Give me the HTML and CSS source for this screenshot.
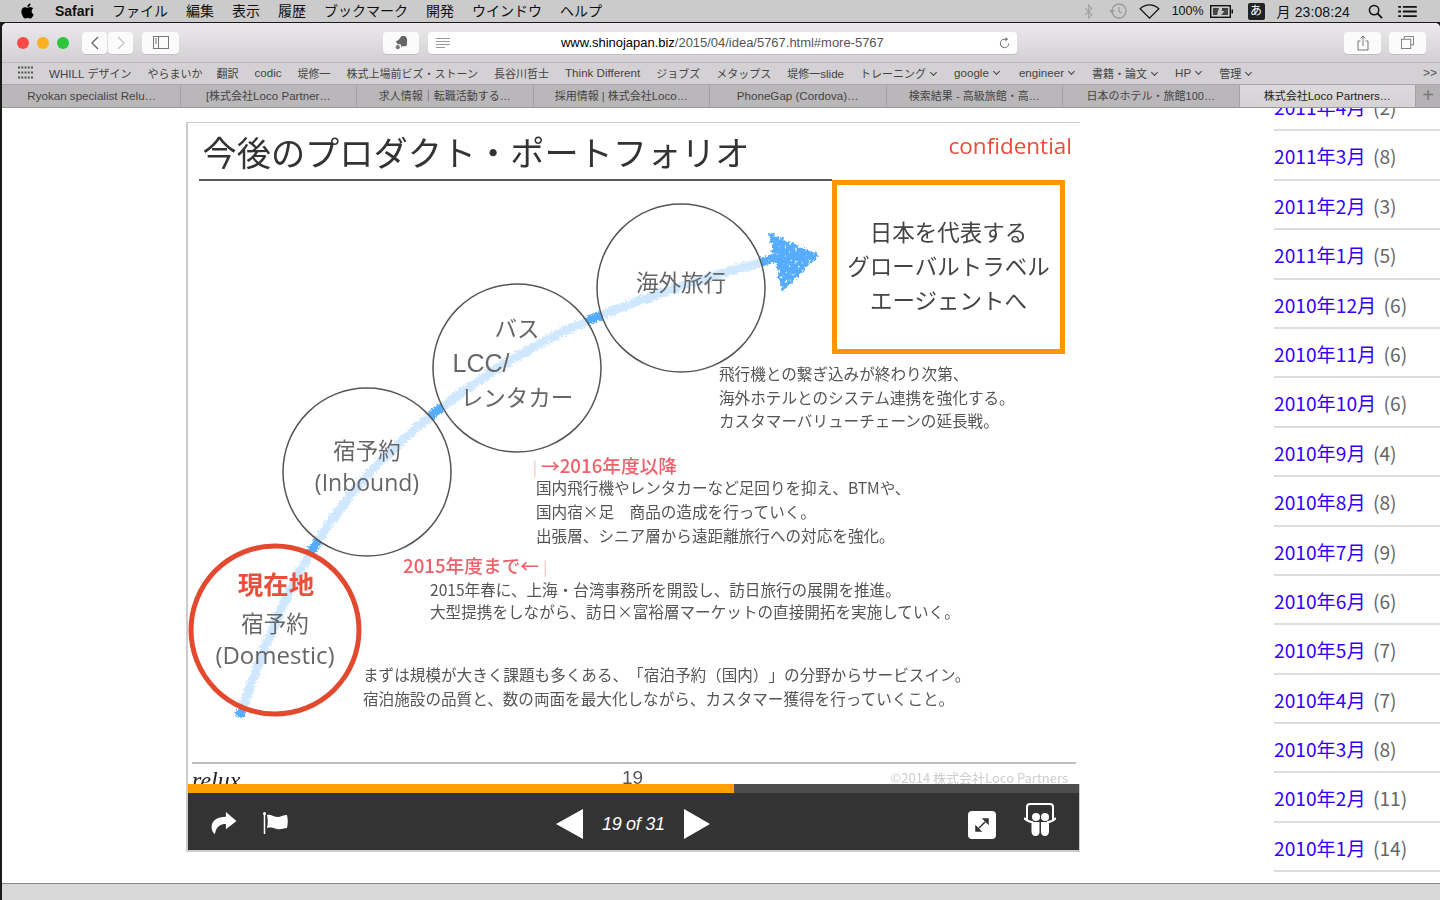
FILE: index.html
```html
<!DOCTYPE html>
<html lang="ja">
<head>
<meta charset="UTF-8">
<title>Safari</title>
<link rel="stylesheet" href="styles.css">
</head>
<body>
<!-- system menu bar -->
<header class="menubar">
	<svg class="apple" viewBox="0 0 16 16"><path d="M11.182.008C11.148-.03 9.923.023 8.857 1.18c-1.066 1.156-.902 2.482-.878 2.516s1.52.087 2.475-1.258.762-2.391.728-2.43m3.314 11.733c-.048-.096-2.325-1.234-2.113-3.422s1.675-2.789 1.698-2.854-.597-.79-1.254-1.157a3.7 3.7 0 0 0-1.563-.434c-.108-.003-.483-.095-1.254.116-.508.139-1.653.589-1.968.607-.316.018-1.256-.522-2.267-.665-.647-.125-1.333.131-1.824.328-.49.196-1.422.754-2.074 2.237-.652 1.482-.311 3.83-.067 4.56s.625 1.924 1.273 2.796c.576.984 1.34 1.667 1.659 1.899s1.219.386 1.843.067c.502-.308 1.408-.485 1.766-.472.357.013 1.061.154 1.782.539.571.197 1.111.115 1.652-.105.541-.221 1.324-1.059 2.238-2.758q.52-1.185.473-1.282"/></svg>
	<nav class="menu">
		<b>Safari</b>
		<span>ファイル</span>
		<span>編集</span>
		<span>表示</span>
		<span>履歴</span>
		<span>ブックマーク</span>
		<span>開発</span>
		<span>ウインドウ</span>
		<span>ヘルプ</span>
	</nav>
	<div class="status">
		<svg class="st-bt" viewBox="0 0 10 16"><path d="M1 4.500l7 7-3.500 3.500V1L8 4.500l-7 7" fill="none" stroke="#a0a0a0" stroke-width="1.100"/></svg>
		<svg class="st-tm" viewBox="0 0 20 18"><circle cx="11" cy="9" r="7" fill="none" stroke="#9a9a9a" stroke-width="1.300"/><path d="M11 5v4.500l3 1.500" fill="none" stroke="#9a9a9a" stroke-width="1.200"/><path d="M1 8l3 3.500L7 8z" fill="#9a9a9a"/></svg>
		<svg class="st-wifi" viewBox="0 0 22 16"><path d="M1 5C7-.5 15-.5 21 5L11 15z" fill="none" stroke="#111" stroke-width="1.300"/></svg>
		<span class="st-pct">100%</span>
		<svg class="st-batt" viewBox="0 0 24 13"><rect x=".7" y=".7" width="19.600" height="11.600" fill="none" stroke="#111" stroke-width="1.400"/><path d="M3 3h6l-2 7H3zM12 3h6v7h-8z" fill="#444"/><path d="M12.500 1L7.500 7h3l-1 5 5-6h-3z" fill="#cbcbcb"/><rect x="21.500" y="4.500" width="1.500" height="4" fill="#111"/></svg>
		<span class="st-ime">あ</span>
		<span class="st-time">月 23:08:24</span>
		<svg class="st-search" viewBox="0 0 16 16"><circle cx="6.500" cy="6.500" r="5" fill="none" stroke="#111" stroke-width="1.600"/><path d="M10 10l5 5" stroke="#111" stroke-width="2"/></svg>
		<svg class="st-list" viewBox="0 0 20 14"><path d="M0 2h3M5 2h15M0 7h3M5 7h15M0 12h3M5 12h15" stroke="#111" stroke-width="2"/></svg>
	</div>
</header>

<div class="window">
	<div class="toolbar">
		<div class="lights">
			<i class="light red"></i>
			<i class="light yellow"></i>
			<i class="light green"></i>
		</div>
		<div class="navbtns">
			<button class="btn btn-nav"><svg viewBox="0 0 10 16"><path d="M8 2L2 8l6 6" fill="none" stroke="#666" stroke-width="1.300"/></svg></button>
			<button class="btn btn-nav"><svg viewBox="0 0 10 16"><path d="M2 2l6 6-6 6" fill="none" stroke="#c4c4c4" stroke-width="1.300"/></svg></button>
		</div>
		<button class="btn btn-side"><svg viewBox="0 0 16 13"><rect x=".5" y=".5" width="15" height="12" fill="none" stroke="#777"/><path d="M5.500 .5v12M2 3h2M2 5h2M2 7h2" stroke="#777"/></svg></button>
		<button class="btn btn-ever"><svg viewBox="0 0 14 16"><path d="M4 5l3-4h4l2 3v6l-1 2H8l-1 1-1-3H3L1 7z" fill="#666"/><circle cx="3" cy="13" r="2.200" fill="#777"/></svg></button>
		<div class="urlbar">
			<svg class="reader" viewBox="0 0 14 10"><path d="M0 .5h14M0 3.500h14M0 6.500h14M0 9.500h9" stroke="#999"/></svg>
			<span class="url"><em>www.shinojapan.biz</em>/2015/04/idea/5767.html#more-5767</span>
			<svg class="reload" viewBox="0 0 14 14"><path d="M11.500 7.500a4.500 4.500 0 1 1-4.500-4.500h2" fill="none" stroke="#777" stroke-width="1.100"/><path d="M8 .5l3 2.500-3 2.500z" fill="#777"/></svg>
		</div>
		<button class="btn btn-right btn-share"><svg viewBox="0 0 12 16"><path d="M3.500 6H1v9h10V6H8.500M6 11V1M3.500 3.500L6 1l2.500 2.500" fill="none" stroke="#777"/></svg></button>
		<button class="btn btn-right btn-tabs"><svg viewBox="0 0 14 14"><path d="M3.500 3.500V.5h10v9h-3" fill="none" stroke="#777"/><rect x=".5" y="3.500" width="10" height="10" fill="none" stroke="#777"/></svg></button>
	</div>

	<div class="bookmarks">
		<svg class="grid-ico" viewBox="0 0 15 13"><path d="M0 1.500h15M0 6.500h15M0 11.500h15" stroke="#555" stroke-width="2" stroke-dasharray="2 1.250"/></svg>
		<a><span class="en">WHILL</span> デザイン</a>
		<a>やらまいか</a>
		<a class="bm-back">翻訳</a>
		<a class="en">codic</a>
		<a>堤修一</a>
		<a>株式上場前ビズ・ストーン</a>
		<a>長谷川哲士</a>
		<a class="en">Think Different</a>
		<a>ジョブズ</a>
		<a>メタップス</a>
		<a>堤修一<span class="en">slide</span></a>
		<a class="drop">トレーニング</a>
		<a class="drop en">google</a>
		<a class="drop en bm-fwd">engineer</a>
		<a class="drop">書籍・論文</a>
		<a class="drop en">HP</a>
		<a class="drop">管理</a>
		<span class="more">&gt;&gt;</span>
	</div>

	<div class="tabs">
		<div class="tab en">Ryokan specialist Relu…</div>
		<div class="tab">[株式会社<span class="en">Loco Partner</span>…</div>
		<div class="tab">求人情報｜転職活動する…</div>
		<div class="tab">採用情報 | 株式会社<span class="en">Loco</span>…</div>
		<div class="tab en">PhoneGap (Cordova)…</div>
		<div class="tab">検索結果 - 高級旅館・高…</div>
		<div class="tab">日本のホテル・旅館100…</div>
		<div class="tab active">株式会社<span class="en">Loco Partners</span>…</div>
		<div class="tab-add">+</div>
	</div>

	<main class="page">
		<section class="player">
			<!-- slide is a free canvas, everything on it is placed by hand -->
			<div class="slide">
				<svg class="art" viewBox="0 0 892 661">
					<defs>
						<filter id="chalk"><feTurbulence baseFrequency=".35" numOctaves="2" seed="4"/><feDisplacementMap in="SourceGraphic" scale="5"/></filter>
						<filter id="speckle" x="-10%" y="-10%" width="120%" height="120%">
							<feTurbulence type="fractalNoise" baseFrequency=".3" numOctaves="2" seed="9" result="n"/>
							<feDisplacementMap in="SourceGraphic" in2="n" scale="7" xChannelSelector="R" yChannelSelector="G" result="rough"/>
							<feColorMatrix in="n" type="matrix" values="0 0 0 0 0 0 0 0 0 0 0 0 0 0 0 8 0 0 0 -1.800" result="holes"/>
							<feComposite in="rough" in2="holes" operator="in"/>
						</filter>
					</defs>
					<path class="stroke" d="M50 593C72 530 95 470 125 422C160 365 200 325 247 287C295 250 345 218 407 193C465 170 525 150 590 133"/>
					<path class="head" d="M580 110L632 132L594 169L588 140z"/>
					<circle class="ring" cx="493" cy="165" r="84"/>
					<circle class="ring" cx="329" cy="245" r="84"/>
					<circle class="ring" cx="179" cy="349" r="84"/>
					<circle class="ring here" cx="87" cy="507" r="84"/>
					<path class="rule" d="M11 57H644"/>
					<path class="rule-foot" d="M4 640H888"/>
				</svg>
				<h1 class="s-title">今後のプロダクト・ポートフォリオ</h1>
				<div class="s-conf">confidential</div>
				<div class="s-goal">日本を代表する<br>グローバルトラベル<br>エージェントへ</div>

				<div class="lbl l-abroad">海外旅行</div>
				<div class="lbl l-bus">バス</div>
				<div class="lbl l-lcc">LCC/</div>
				<div class="lbl l-rent">レンタカー</div>
				<div class="lbl l-inb1">宿予約</div>
				<div class="lbl l-inb2">(Inbound)</div>
				<div class="lbl l-now">現在地</div>
				<div class="lbl l-dom1">宿予約</div>
				<div class="lbl l-dom2">(Domestic)</div>

				<p class="note n-1">飛行機との繋ぎ込みが終わり次第、<br>海外ホテルとのシステム連携を強化する。<br>カスタマーバリューチェーンの延長戦。</p>
				<div class="head-red h-2016"><u>|</u> →2016年度以降</div>
				<p class="note n-2">国内飛行機やレンタカーなど足回りを抑え、BTMや、<br>国内宿×足　商品の造成を行っていく。<br>出張層、シニア層から遠距離旅行への対応を強化。</p>
				<div class="head-red h-2015">2015年度まで← <u>|</u></div>
				<p class="note n-3">2015年春に、上海・台湾事務所を開設し、訪日旅行の展開を推進。<br>大型提携をしながら、訪日×富裕層マーケットの直接開拓を実施していく。</p>
				<p class="note n-4">まずは規模が大きく課題も多くある、「宿泊予約（国内）」の分野からサービスイン。<br>宿泊施設の品質と、数の両面を最大化しながら、カスタマー獲得を行っていくこと。</p>

				<div class="s-logo">relux</div>
				<div class="s-num">19</div>
				<div class="s-copy">©2014 株式会社Loco Partners</div>
			</div>

			<div class="progress"><div class="progress-on" style="width: 61.3%"></div></div>

			<div class="controls">
				<div class="ctl-left">
					<svg class="ic-share" viewBox="0 0 26 23"><path d="M15 0l11 9.500L15 18v-5.500C9 12.500 5 15 3.500 23 1.500 22 0 19 0 16 0 9 6 5 15 5z" fill="#fff"/></svg>
					<svg class="ic-flag" viewBox="0 0 26 22"><circle cx="1.500" cy="1.500" r="1.500" fill="#fff"/><path d="M1.500 1v21" stroke="#fff" stroke-width="1.500"/><path d="M4 3c4-1 6 2 10 2s6-2 10-2c1 4 1 9 0 13-4 0-6 2-10 1s-6-2-10-1c1-4 1-9 0-13z" fill="#fff"/></svg>
				</div>
				<div class="ctl-mid">
					<i class="tri tri-l"></i>
					<span class="count">19 of 31</span>
					<i class="tri tri-r"></i>
				</div>
				<div class="ctl-right">
					<span class="ic-full"><svg viewBox="0 0 14 14"><path d="M8.500 1H13v4.500zM5.500 13H1V8.500zM10 4L4 10" fill="#333" stroke="#333" stroke-width="1.500"/></svg></span>
					<svg class="ic-ss" viewBox="0 0 32 33"><path d="M3 18V4a3 3 0 0 1 3-3h20a3 3 0 0 1 3 3v14" fill="none" stroke="#fff" stroke-width="2"/><path d="M0 15c3 3 5 4 9 4M32 15c-3 3-5 4-9 4" fill="none" stroke="#fff" stroke-width="2"/><circle cx="12" cy="14" r="4" fill="#fff"/><circle cx="21" cy="14" r="4" fill="#fff"/><path d="M7.500 19h8v9.500a4 4 0 0 1-4 4.500c-2.500 0-4-2-4-4.500zM17 19h8v9.500c0 2.500-1.500 4.500-4 4.500a4 4 0 0 1-4-4.500z" fill="#fff"/></svg>
				</div>
			</div>
		</section>

		<ul class="archive">
			<li><a>2011年4月</a> (2)</li>
			<li><a>2011年3月</a> (8)</li>
			<li><a>2011年2月</a> (3)</li>
			<li><a>2011年1月</a> (5)</li>
			<li><a>2010年12月</a> (6)</li>
			<li><a>2010年11月</a> (6)</li>
			<li><a>2010年10月</a> (6)</li>
			<li><a>2010年9月</a> (4)</li>
			<li><a>2010年8月</a> (8)</li>
			<li><a>2010年7月</a> (9)</li>
			<li><a>2010年6月</a> (6)</li>
			<li><a>2010年5月</a> (7)</li>
			<li><a>2010年4月</a> (7)</li>
			<li><a>2010年3月</a> (8)</li>
			<li><a>2010年2月</a> (11)</li>
			<li><a>2010年1月</a> (14)</li>
		</ul>
	</main>

	<div class="hscroll"></div>
</div>
</body>
</html>
```

FILE: styles.css
```css
* {
	box-sizing: border-box;
}
html, body {
	height: 100%;
}
body {
	margin: 0;
	display: flex;
	flex-direction: column;
	overflow: hidden;
	background: #1a1a1a;
	font-family: "Liberation Sans", "Noto Sans CJK JP", sans-serif;
}
.en {
	font-size: 11.600px;
}

/* menu bar */
.menubar {
	display: flex;
	align-items: center;
	height: 22px;
	flex: none;
	background: #cbcbcb;
	color: #111;
	font-size: 14px;
}
.apple {
	width: 15px;
	height: 16px;
	margin-left: 20px;
}
.menu {
	display: flex;
	align-items: baseline;
	gap: 18px;
	margin: -1px 0 0 20px;
	line-height: 20px;
}
.status {
	display: flex;
	align-items: center;
	margin-left: auto;
	font-size: 13px;
}
.st-bt {
	width: 10px;
	height: 15px;
	margin-right: 14px;
}
.st-tm {
	width: 20px;
	height: 18px;
	margin-right: 11px;
}
.st-wifi {
	width: 21px;
	height: 15px;
	margin-right: 12px;
}
.st-pct {
	margin-right: 6px;
	font-size: 12.500px;
}
.st-batt {
	width: 24px;
	height: 13px;
	margin-right: 14px;
}
.st-ime {
	width: 17px;
	height: 17px;
	margin-right: 12px;
	border-radius: 2px;
	background: #222;
	color: #fff;
	font-size: 12px;
	line-height: 16px;
	text-align: center;
}
.st-time {
	margin-right: 18px;
	font-size: 14px;
	letter-spacing: .1px;
}
.st-search {
	width: 15px;
	height: 15px;
	margin-right: 15px;
}
.st-list {
	width: 19px;
	height: 13px;
	margin-right: 23px;
}

/* browser window */
.window {
	display: flex;
	flex-direction: column;
	flex: 1;
	min-height: 0;
	margin-left: 2px;
	margin-top: 1px;
	border-radius: 5px 5px 0 0;
	overflow: hidden;
	background: #fff;
}
.toolbar {
	display: flex;
	align-items: center;
	height: 39px;
	flex: none;
	padding-left: 15px;
	background: linear-gradient(#ebe9eb, #d2d0d2);
}
.lights {
	display: flex;
	gap: 8px;
}
.light {
	width: 12px;
	height: 12px;
	border-radius: 50%;
}
.red {
	background: #fc4a47;
}
.yellow {
	background: #fdb022;
}
.green {
	background: #2bc63c;
}
.btn {
	display: flex;
	align-items: center;
	justify-content: center;
	height: 22px;
	padding: 0;
	border: 0;
	border-radius: 4px;
	background: #fbfbfb;
	box-shadow: 0 1px 0 #c0bec0;
}
.navbtns {
	display: flex;
	gap: 1px;
	margin-left: 13px;
}
.btn-nav {
	width: 25px;
}
.btn-nav svg {
	width: 10px;
	height: 16px;
}
.btn-side {
	width: 37px;
	margin-left: 9px;
}
.btn-side svg {
	width: 16px;
	height: 13px;
}
.btn-ever {
	width: 36px;
	margin-left: 204px;
}
.btn-ever svg {
	width: 13px;
	height: 15px;
}
.urlbar {
	display: flex;
	align-items: center;
	width: 589px;
	height: 22px;
	margin-left: 9px;
	padding: 0 6px 0 8px;
	border-radius: 4px;
	background: #fff;
	box-shadow: 0 1px 0 #c0bec0;
}
.reader {
	width: 14px;
	height: 10px;
}
.url {
	margin-left: 111px;
	color: #555;
	font-size: 13px;
	letter-spacing: -.02px;
	white-space: nowrap;
}
.url em {
	color: #000;
	font-style: normal;
}
.reload {
	width: 13px;
	height: 14px;
	margin-left: auto;
}
.btn-right {
	width: 37px;
}
.btn-share {
	margin-left: 327px;
}
.btn-share svg {
	width: 12px;
	height: 16px;
}
.btn-tabs {
	margin-left: 8px;
}
.btn-tabs svg {
	width: 13px;
	height: 13px;
}
.bookmarks {
	display: flex;
	align-items: center;
	gap: 16px;
	height: 22px;
	flex: none;
	padding: 0 0 2px 16px;
	border-top: 1px solid #bbb;
	background: #d3d1d3;
	color: #444;
	font-size: 11px;
	white-space: nowrap;
}
.grid-ico {
	width: 15px;
	height: 13px;
}
.bm-back {
	margin-left: -2px;
}
.bm-fwd {
	margin-left: 2px;
}
.drop::after {
	content: "";
	display: inline-block;
	width: 4px;
	height: 4px;
	margin: 0 2px 3px 5px;
	border: solid #444;
	border-width: 0 1.300px 1.300px 0;
	transform: rotate(45deg);
}
.more {
	margin-left: auto;
	margin-right: 3px;
	color: #555;
	font-size: 12px;
}
.tabs {
	display: flex;
	height: 24px;
	flex: none;
	padding-left: 2px;
	border-top: 1px solid #a9a7a9;
	border-bottom: 1px solid #999;
	background: #b9b7b9;
	color: #444;
	font-size: 11px;
}
.tab {
	width: 176.500px;
	border-right: 1px solid #a3a1a3;
	line-height: 22px;
	text-align: center;
	white-space: nowrap;
}
.tab.active {
	background: linear-gradient(#dbd9db, #d5d3d5);
	color: #222;
}
.tab-add {
	flex: 1;
	background: #b4b2b4;
	color: #777;
	font-size: 20px;
	line-height: 20px;
	text-align: center;
}

/* page */
.page {
	display: flex;
	align-items: flex-start;
	flex: 1;
	min-height: 0;
	overflow: hidden;
	background: #fff;
}
.player {
	flex: none;
	width: 894px;
	margin: 14px 0 0 184px;
	border: 1px solid #ccc;
	border-bottom-width: 2px;
	border-left-width: 2px;
}
.slide {
	position: relative;
	width: 892px;
	height: 661px;
	overflow: hidden;
	background: #fff;
	color: #555;
	font-family: "Noto Sans CJK JP", sans-serif;
	text-spacing-trim: space-all;
	filter: blur(.35px);
}
.art {
	position: absolute;
	left: 0;
	top: 0;
	width: 892px;
	height: 661px;
}
.stroke {
	fill: none;
	stroke: #56adff;
	stroke-width: 9;
	filter: url(#chalk);
}
.head {
	fill: #56adff;
	filter: url(#speckle);
}
.ring {
	fill: rgba(255, 255, 255, .72);
	stroke: #555;
	stroke-width: 1.500;
}
.ring.here {
	stroke: #e2492f;
	stroke-width: 5;
}
.rule {
	stroke: #222;
	stroke-width: 1.500;
}
.rule-foot {
	stroke: #aaa;
	stroke-width: 1.500;
}
.s-title {
	position: absolute;
	left: 14.500px;
	top: 5px;
	margin: 0;
	color: #333;
	font-size: 34.200px;
	font-weight: 400;
	line-height: 46px;
	white-space: nowrap;
}
.s-conf {
	position: absolute;
	right: 8px;
	top: 6px;
	color: #ee4b3a;
	font-family: "Open Sans", sans-serif;
	font-size: 22.500px;
	line-height: 34px;
}
.s-goal {
	position: absolute;
	left: 644px;
	top: 57px;
	width: 233px;
	height: 174px;
	padding-top: 29px;
	border: 5px solid #ff9600;
	color: #444;
	font-size: 22.500px;
	line-height: 34px;
	text-align: center;
	white-space: nowrap;
}
.lbl {
	position: absolute;
	width: 160px;
	color: #666;
	font-size: 22.500px;
	line-height: 32px;
	text-align: center;
	white-space: nowrap;
}
.l-abroad {
	left: 413px;
	top: 142px;
}
.l-bus {
	left: 249px;
	top: 188px;
}
.l-lcc {
	left: 213px;
	top: 224px;
	font-family: "Liberation Sans", sans-serif;
	font-size: 25px;
}
.l-rent {
	left: 249px;
	top: 257px;
}
.l-inb1 {
	left: 99px;
	top: 310px;
}
.l-inb2 {
	left: 99px;
	top: 343px;
	font-family: "Open Sans", sans-serif;
	font-size: 23px;
}
.l-now {
	left: 8px;
	top: 444px;
	color: #e8503a;
	font-size: 25.500px;
	font-weight: 700;
}
.l-dom1 {
	left: 7px;
	top: 483px;
}
.l-dom2 {
	left: 7px;
	top: 516px;
	font-family: "Open Sans", sans-serif;
	font-size: 24px;
}
.note {
	position: absolute;
	margin: 0;
	color: #555;
	font-size: 15.600px;
	line-height: 23.500px;
	white-space: nowrap;
}
.n-1 {
	left: 531px;
	top: 239px;
}
.n-2 {
	left: 348px;
	top: 352px;
	line-height: 24px;
}
.n-3 {
	left: 242px;
	top: 455px;
	line-height: 22px;
}
.n-4 {
	left: 175px;
	top: 539px;
	line-height: 24px;
}
.head-red {
	position: absolute;
	color: #f0606a;
	font-size: 18.700px;
	font-weight: 500;
	line-height: 26px;
	white-space: nowrap;
}
.head-red u {
	color: #f4a0a0;
	font-size: 15px;
	font-weight: 300;
	text-decoration: none;
}
.h-2016 {
	left: 345px;
	top: 329px;
}
.h-2015 {
	left: 215px;
	top: 429px;
}
.s-logo {
	position: absolute;
	left: 4px;
	top: 642px;
	color: #222;
	font-family: "Liberation Serif", serif;
	font-size: 24px;
	font-style: italic;
	line-height: 30px;
}
.s-num {
	position: absolute;
	left: 434px;
	top: 643px;
	font-family: "Liberation Sans", sans-serif;
	font-size: 19px;
	line-height: 24px;
}
.s-copy {
	position: absolute;
	right: 12px;
	top: 646px;
	color: #ccc;
	font-size: 13px;
	line-height: 18px;
	white-space: nowrap;
}
.progress {
	height: 9px;
	background: #4d4d4d;
}
.progress-on {
	height: 100%;
	background: #ffa000;
}
.controls {
	display: flex;
	align-items: center;
	justify-content: space-between;
	position: relative;
	height: 57px;
	background: #333;
}
.ctl-left {
	display: flex;
	align-items: center;
	gap: 26px;
	margin-top: 3px;
	padding-left: 23px;
}
.ic-share,
.ic-flag {
	width: 26px;
	height: 22px;
}
.ctl-mid {
	display: flex;
	align-items: center;
	gap: 19px;
	position: absolute;
	left: 368px;
	top: 16px;
}
.tri {
	width: 0;
	height: 0;
	border-style: solid;
	border-width: 15px 0;
	border-color: transparent;
}
.tri-l {
	border-right: 27px solid #fff;
}
.tri-r {
	border-left: 26px solid #fff;
}
.count {
	color: #fff;
	font-size: 18px;
	font-style: italic;
	letter-spacing: -.3px;
	white-space: nowrap;
}
.ctl-right {
	display: flex;
	align-items: center;
	gap: 28px;
	padding-right: 23px;
}
.ic-full {
	display: flex;
	align-items: center;
	justify-content: center;
	width: 28px;
	height: 28px;
	margin-top: 7px;
	border-radius: 4px;
	background: #fff;
}
.ic-full svg {
	width: 14px;
	height: 14px;
}
.ic-ss {
	width: 32px;
	height: 33px;
	margin-top: -4px;
}
.archive {
	flex: none;
	width: 166px;
	margin: -26px 0 0 194px;
	padding: 0;
	list-style: none;
	color: #666;
	font-family: "Noto Sans CJK JP", sans-serif;
	font-size: 19.200px;
}
.archive li {
	height: 49.400px;
	padding-top: 9px;
	border-bottom: 2px solid #ddd;
	line-height: 32px;
	white-space: nowrap;
}
.archive a {
	margin-right: 3px;
	color: #3300ff;
}
.hscroll {
	height: 17px;
	flex: none;
	border-top: 1px solid #888;
	background: #d8d8d8;
}
```
